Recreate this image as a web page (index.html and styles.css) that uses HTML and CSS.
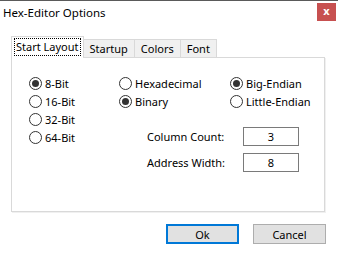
FILE: index.html
```html
<!DOCTYPE html>
<html lang="en">
<head>
  <meta charset="UTF-8">
  <title>Hex-Editor Options</title>
  <link rel="stylesheet" href="styles.css">
</head>
<body>
  <div class="window">
    <div class="titlebar">
      <span class="title">Hex-Editor Options</span>
      <span class="close">x</span>
    </div>

    <div class="tabs">
      <div class="tab active"><span class="focus">Start Layout</span></div>
      <div class="tab">Startup</div>
      <div class="tab">Colors</div>
      <div class="tab">Font</div>
    </div>

    <div class="panel">
      <div class="col first">
        <label class="radio checked"><span class="dot"></span>8-Bit</label>
        <label class="radio"><span class="dot"></span>16-Bit</label>
        <label class="radio"><span class="dot"></span>32-Bit</label>
        <label class="radio"><span class="dot"></span>64-Bit</label>
      </div>
      <div class="right">
        <div class="pairs">
          <label class="radio"><span class="dot"></span>Hexadecimal</label>
          <label class="radio checked"><span class="dot"></span>Big-Endian</label>
          <label class="radio checked"><span class="dot"></span>Binary</label>
          <label class="radio"><span class="dot"></span>Little-Endian</label>
        </div>
        <div class="fields">
          <div class="field"><span>Column Count:</span><div class="box">3</div></div>
          <div class="field"><span>Address Width:</span><div class="box">8</div></div>
        </div>
      </div>
    </div>

    <div class="buttons">
      <button class="btn default">Ok</button>
      <button class="btn">Cancel</button>
    </div>
  </div>
</body>
</html>
```

FILE: styles.css
```css
body {
  margin: 0;
  background: #fff;
  font-family: "Noto Sans", "Open Sans", sans-serif;
  font-size: 11px;
  color: #000;
}

.window {
  width: 338px;
  height: 257px;
  box-sizing: border-box;
  border-top: 1px solid #5a5a5a;
  background: #fff;
}

.titlebar {
  display: flex;
  justify-content: space-between;
  align-items: flex-start;
  height: 24px;
}

.title {
  font-size: 11.5px;
  margin: 4px 0 0 3px;
}

.close {
  width: 19px;
  height: 18px;
  margin: 2px 2px 0 0;
  background: #c75050;
  color: #fff;
  font-weight: bold;
  font-size: 11px;
  line-height: 16px;
  text-align: center;
}

.tabs {
  display: flex;
  align-items: flex-end;
  margin: 11px 0 0 11px;
  position: relative;
  z-index: 1;
}

.tab {
  height: 18px;
  line-height: 17px;
  padding: 0 6px;
  background: #f0f0f0;
  border: 1px solid #d9d9d9;
  border-bottom: none;
  margin-left: -1px;
  box-sizing: border-box;
}

.tab.active {
  height: 22px;
  background: #fff;
  padding: 0 2px;
  margin-left: 0;
  margin-bottom: -1px;
}

.focus {
  display: inline-block;
  margin-top: 1px;
  padding: 0 1px;
  line-height: 16px;
  border: 1px dotted #000;
}

.panel {
  display: flex;
  margin-left: 11px;
  width: 314px;
  height: 155px;
  box-sizing: border-box;
  border: 1px solid #d9d9d9;
  box-shadow: 1px 1px 0 #f0f0f0;
  padding: 16px 0 0 17px;
}

.col {
  display: flex;
  flex-direction: column;
  width: 90px;
}

.radio {
  display: flex;
  align-items: center;
  height: 18px;
  white-space: nowrap;
}

.dot {
  width: 11px;
  height: 11px;
  border: 1px solid #333;
  border-radius: 50%;
  margin-right: 3px;
  display: flex;
  align-items: center;
  justify-content: center;
}

.checked .dot::after {
  content: "";
  width: 7px;
  height: 7px;
  border-radius: 50%;
  background: #333;
}

.pairs {
  display: grid;
  grid-template-columns: 111px auto;
}

.fields {
  display: flex;
  flex-direction: column;
  gap: 7px;
  margin: 17px 0 0 28px;
}

.field {
  display: flex;
  align-items: center;
}

.field span {
  width: 96px;
}

.box {
  width: 56px;
  height: 19px;
  box-sizing: border-box;
  border: 1px solid #7a7a7a;
  text-align: center;
  line-height: 17px;
}

.buttons {
  display: flex;
  justify-content: flex-end;
  gap: 14px;
  margin: 12px 12px 0 0;
}

.btn {
  width: 73px;
  height: 20px;
  box-sizing: border-box;
  background: #e1e1e1;
  border: 1px solid #adadad;
  font-family: inherit;
  font-size: 11px;
  color: #000;
  padding: 0;
}

.btn.default {
  border: 2px solid #0078d7;
}
```
